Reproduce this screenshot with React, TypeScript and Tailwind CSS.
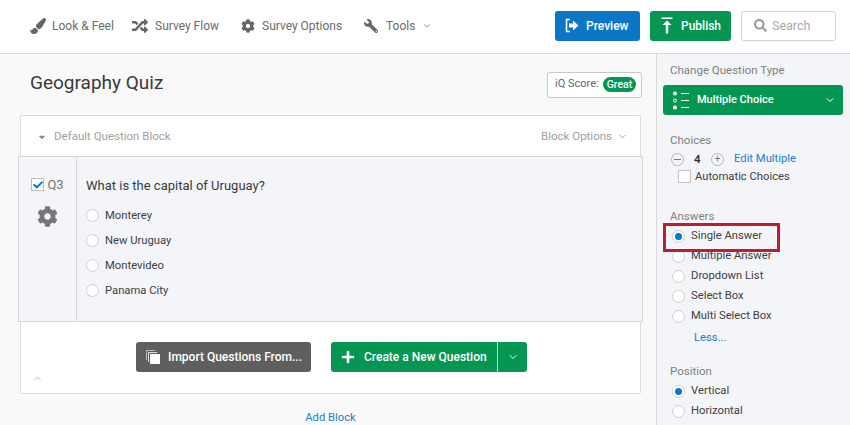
import React from "react";
import { FaPaintBrush, FaRandom, FaCog, FaWrench, FaSearch, FaPlus, FaCheck, FaCaretDown } from "react-icons/fa";
import { ChevronDown, ChevronUp } from "lucide-react";

function NavItem({ icon, label, gap, width }: { icon: React.ReactNode; label: string; gap: string; width: string }) {
  return (
    <div className={`flex items-center ${gap} ${width}`}>
      {icon}
      <span className="text-[12px] text-[#6b6b6b] whitespace-nowrap">{label}</span>
    </div>
  );
}

function Radio({ label, checked }: { label: string; checked?: boolean }) {
  return (
    <div className="flex items-center h-5">
      <span className="w-[13px] h-[13px] rounded-full bg-white border border-[#cfcfcf] flex items-center justify-center shrink-0">
        {checked && <span className="w-[7px] h-[7px] rounded-full bg-[#0b76c5]" />}
      </span>
      <span className="ml-[6px] pt-px text-[11.25px] text-[#404040] whitespace-nowrap">{label}</span>
    </div>
  );
}

function Choice({ label }: { label: string }) {
  return (
    <div className="flex items-center h-[25px]">
      <span className="w-[13px] h-[13px] rounded-full bg-white border border-[#cfcfcf] shrink-0" />
      <span className="ml-[6px] pt-px text-[11.25px] text-[#404040]">{label}</span>
    </div>
  );
}

export default function App() {
  return (
    <div className="w-[850px] h-[425px] overflow-hidden flex flex-col bg-white font-['Roboto','Liberation_Sans',sans-serif]">
      <header className="h-[54px] shrink-0 border-b border-[#d9d9d9] flex items-center pl-[30px] pb-[2px] bg-white">
        <NavItem width="w-[100px]" gap="gap-[6px]" label="Look & Feel" icon={<FaPaintBrush className="text-[#666] w-4 h-4" />} />
        <NavItem width="w-[111px]" gap="gap-[5px]" label="Survey Flow" icon={<FaRandom className="text-[#666] w-5 h-4" />} />
        <NavItem width="w-[123px]" gap="gap-[7px]" label="Survey Options" icon={<FaCog className="text-[#666] w-[14px] h-[14px]" />} />
        <div className="flex items-center w-[191px]">
          <FaWrench className="text-[#666] w-[14px] h-[14px] -scale-x-100" />
          <span className="ml-2 text-[12px] text-[#6b6b6b]">Tools</span>
          <ChevronDown className="ml-[7px] w-[10px] h-[10px] text-[#777]" />
        </div>
        <div className="w-[85px] h-[30px] rounded-[3px] bg-[#0b76c5] flex items-center pl-[10px] text-white text-[12px] font-medium">
          <svg width="14" height="15" viewBox="0 0 14 15" fill="none">
            <path d="M5 1.500H1.500v12H5" stroke="white" strokeWidth="1.500" />
            <path d="M4 5.500h4V2.500l5.500 5-5.500 5v-3H4z" fill="white" />
          </svg>
          <span className="ml-[7px]">Preview</span>
        </div>
        <div className="ml-[10px] w-[81px] h-[30px] rounded-[3px] bg-[#069654] flex items-center pl-[11px] text-white text-[12px] font-medium">
          <svg width="12" height="17" viewBox="0 0 12 17" fill="white">
            <rect x="0.500" y="0.500" width="11" height="1.500" />
            <path d="M6 3.500l4.500 4.500H7.200v8.500H4.800V8H1.500z" />
          </svg>
          <span className="ml-[8px]">Publish</span>
        </div>
        <div className="ml-[10px] w-[95px] h-[30px] rounded-[3px] bg-white border border-[#d2d2d2] flex items-center pl-3">
          <FaSearch className="w-[13px] h-[13px] text-[#9a9a9a]" />
          <span className="ml-[5px] pt-px text-[12.5px] text-[#a8a8a8]">Search</span>
        </div>
      </header>

      <div className="flex flex-1 min-h-0">
        <main className="w-[657px] shrink-0 bg-[#f9f9f9] border-r border-[#d9d9d9] pl-5 pr-[15px]">
          <div className="flex items-center justify-between h-[61px] pl-[10px] -mr-px">
            <h1 className="text-[19px] text-[#3a3a3a] font-normal pb-[3px]">Geography Quiz</h1>
            <div className="w-[95px] h-[26px] bg-white border border-[#c8c8c8] rounded-[3px] flex items-center pl-[7px] text-[11px] text-[#666] whitespace-nowrap">
              iQ Score:
              <span className="ml-[4px] h-[15px] px-[4px] rounded-full bg-[#069654] text-white text-[10.5px] font-medium flex items-center">Great</span>
            </div>
          </div>

          <section className="bg-white border border-[#dcdcdc] rounded-[2px] h-[279px] flex flex-col">
            <div className="h-[40px] shrink-0 flex items-center justify-between pl-[16px] pr-[12px] pt-[1px]">
              <div className="flex items-center">
                <FaCaretDown className="w-[10px] h-[10px] text-[#8a8a8a]" />
                <span className="ml-[7px] text-[11.5px] text-[#a0a0a0]">Default Question Block</span>
              </div>
              <div className="flex items-center">
                <span className="text-[11.5px] text-[#a0a0a0]">Block Options</span>
                <ChevronDown className="ml-[5px] w-[11px] h-[11px] text-[#999]" />
              </div>
            </div>

            <div className="-mx-[3px] h-[166px] shrink-0 bg-[#f4f5f9] border border-[#d6d6d6] flex">
              <div className="w-[58px] shrink-0 border-r border-[#d6d6d6] flex flex-col items-center pt-[18px]">
                <div className="flex items-center">
                  <span className="w-[13px] h-[13px] bg-white border border-[#bdbdbd] flex items-center justify-center">
                    <FaCheck className="w-[10px] h-[10px] text-[#0b76c5]" />
                  </span>
                  <span className="ml-[3px] text-[13px] text-[#777]">Q3</span>
                </div>
                <FaCog className="mt-[11px] w-[21px] h-[21px] text-[#777]" />
              </div>
              <div className="flex-1 pl-[9px] pt-[20px]">
                <p className="text-[13px] text-[#3a3a3a] leading-[18px] mb-[8px]">What is the capital of Uruguay?</p>
                <Choice label="Monterey" />
                <Choice label="New Uruguay" />
                <Choice label="Montevideo" />
                <Choice label="Panama City" />
              </div>
            </div>

            <div className="relative flex-1 flex justify-center pt-[20px] pl-[2px]">
              <div className="w-[175px] h-[30px] rounded-[3px] bg-[#5f5f5f] flex items-center pl-[10px] text-white text-[12px] font-medium">
                <svg width="14" height="14" viewBox="0 0 14 14">
                  <path d="M0 0h9v1H1v9H0z" fill="#bbb" />
                  <path d="M2 2h9v1H3v9H2z" fill="#ddd" />
                  <rect x="4" y="4" width="10" height="10" fill="white" />
                </svg>
                <span className="ml-[8px] whitespace-nowrap">Import Questions From...</span>
              </div>
              <div className="ml-5 w-[196px] h-[30px] rounded-[3px] bg-[#069654] flex items-center text-white text-[12px] font-medium">
                <FaPlus className="ml-[10px] w-[14px] h-[14px]" />
                <span className="ml-[9px] whitespace-nowrap">Create a New Question</span>
                <span className="ml-auto w-[30px] h-full border-l border-[#bfe3d0] flex items-center justify-center">
                  <ChevronDown className="w-3 h-3" />
                </span>
              </div>
              <ChevronUp className="absolute left-[11px] bottom-[9px] w-[11px] h-[11px] text-[#aaa]" />
            </div>
          </section>

          <div className="mt-[16px] text-center text-[11.25px] text-[#1a7fc7]">Add Block</div>
        </main>

        <aside className="flex-1 bg-[#f4f5f9] pl-[6px] pr-[7px] pt-[9px]">
          <h3 className="pl-[7px] text-[11.5px] text-[#808080] leading-[14px]">Change Question Type</h3>
          <div className="mt-[8px] h-[30px] rounded-[3px] bg-[#069654] flex items-center pl-[10px] text-white">
            <svg width="17" height="19" viewBox="0 0 17 19" fill="none">
              <circle cx="2" cy="2.500" r="2" fill="white" />
              <circle cx="2" cy="9.500" r="1.500" stroke="white" />
              <circle cx="2" cy="16.500" r="2" fill="white" />
              <path d="M8 2.500h8M8 9.500h8M8 16.500h8" stroke="white" />
            </svg>
            <span className="ml-[7px] pt-px text-[11px] font-medium">Multiple Choice</span>
            <ChevronDown className="ml-auto mr-[7px] w-3 h-3" />
          </div>

          <h3 className="mt-[18px] pl-[7px] text-[11.5px] text-[#808080] leading-[14px]">Choices</h3>
          <div className="mt-[5px] pl-[8px] flex items-center h-[14px]">
            <span className="w-[13px] h-[13px] rounded-full border border-[#b5b5b5] flex items-center justify-center"><span className="w-[7px] h-px bg-[#777]" /></span>
            <span className="ml-[10px] w-[17px] pt-px text-[11.5px] font-semibold text-[#333]">4</span>
            <span className="w-[13px] h-[13px] rounded-full border border-[#b5b5b5] relative flex items-center justify-center text-[10px] leading-none text-[#777]">+</span>
            <span className="ml-[10px] pt-px text-[11.25px] text-[#1a7fc7]">Edit Multiple</span>
          </div>
          <div className="mt-[3px] pl-[15px] flex items-center h-[15px]">
            <span className="w-[13px] h-[13px] bg-white border border-[#c4c4c4]" />
            <span className="ml-[4px] pt-px text-[11.25px] text-[#404040]">Automatic Choices</span>
          </div>

          <h3 className="mt-[25px] pl-[7px] text-[11.5px] text-[#808080] leading-[14px]">Answers</h3>
          <div className="relative mt-[3px] pl-[9px]">
            <Radio label="Single Answer" checked />
            <Radio label="Multiple Answer" />
            <Radio label="Dropdown List" />
            <Radio label="Select Box" />
            <Radio label="Multi Select Box" />
            <div className="absolute left-0 -top-[3px] w-[117px] h-[29px] border-[3px] border-[#bb1e30]" />
          </div>
          <div className="mt-[3px] pl-[31px] text-[11.25px] text-[#1a7fc7] leading-[18px]">Less...</div>

          <h3 className="mt-[17px] pl-[7px] text-[11.5px] text-[#808080] leading-[14px]">Position</h3>
          <div className="mt-[3px] pl-[9px]">
            <Radio label="Vertical" checked />
            <Radio label="Horizontal" />
          </div>
        </aside>
      </div>
    </div>
  );
}
